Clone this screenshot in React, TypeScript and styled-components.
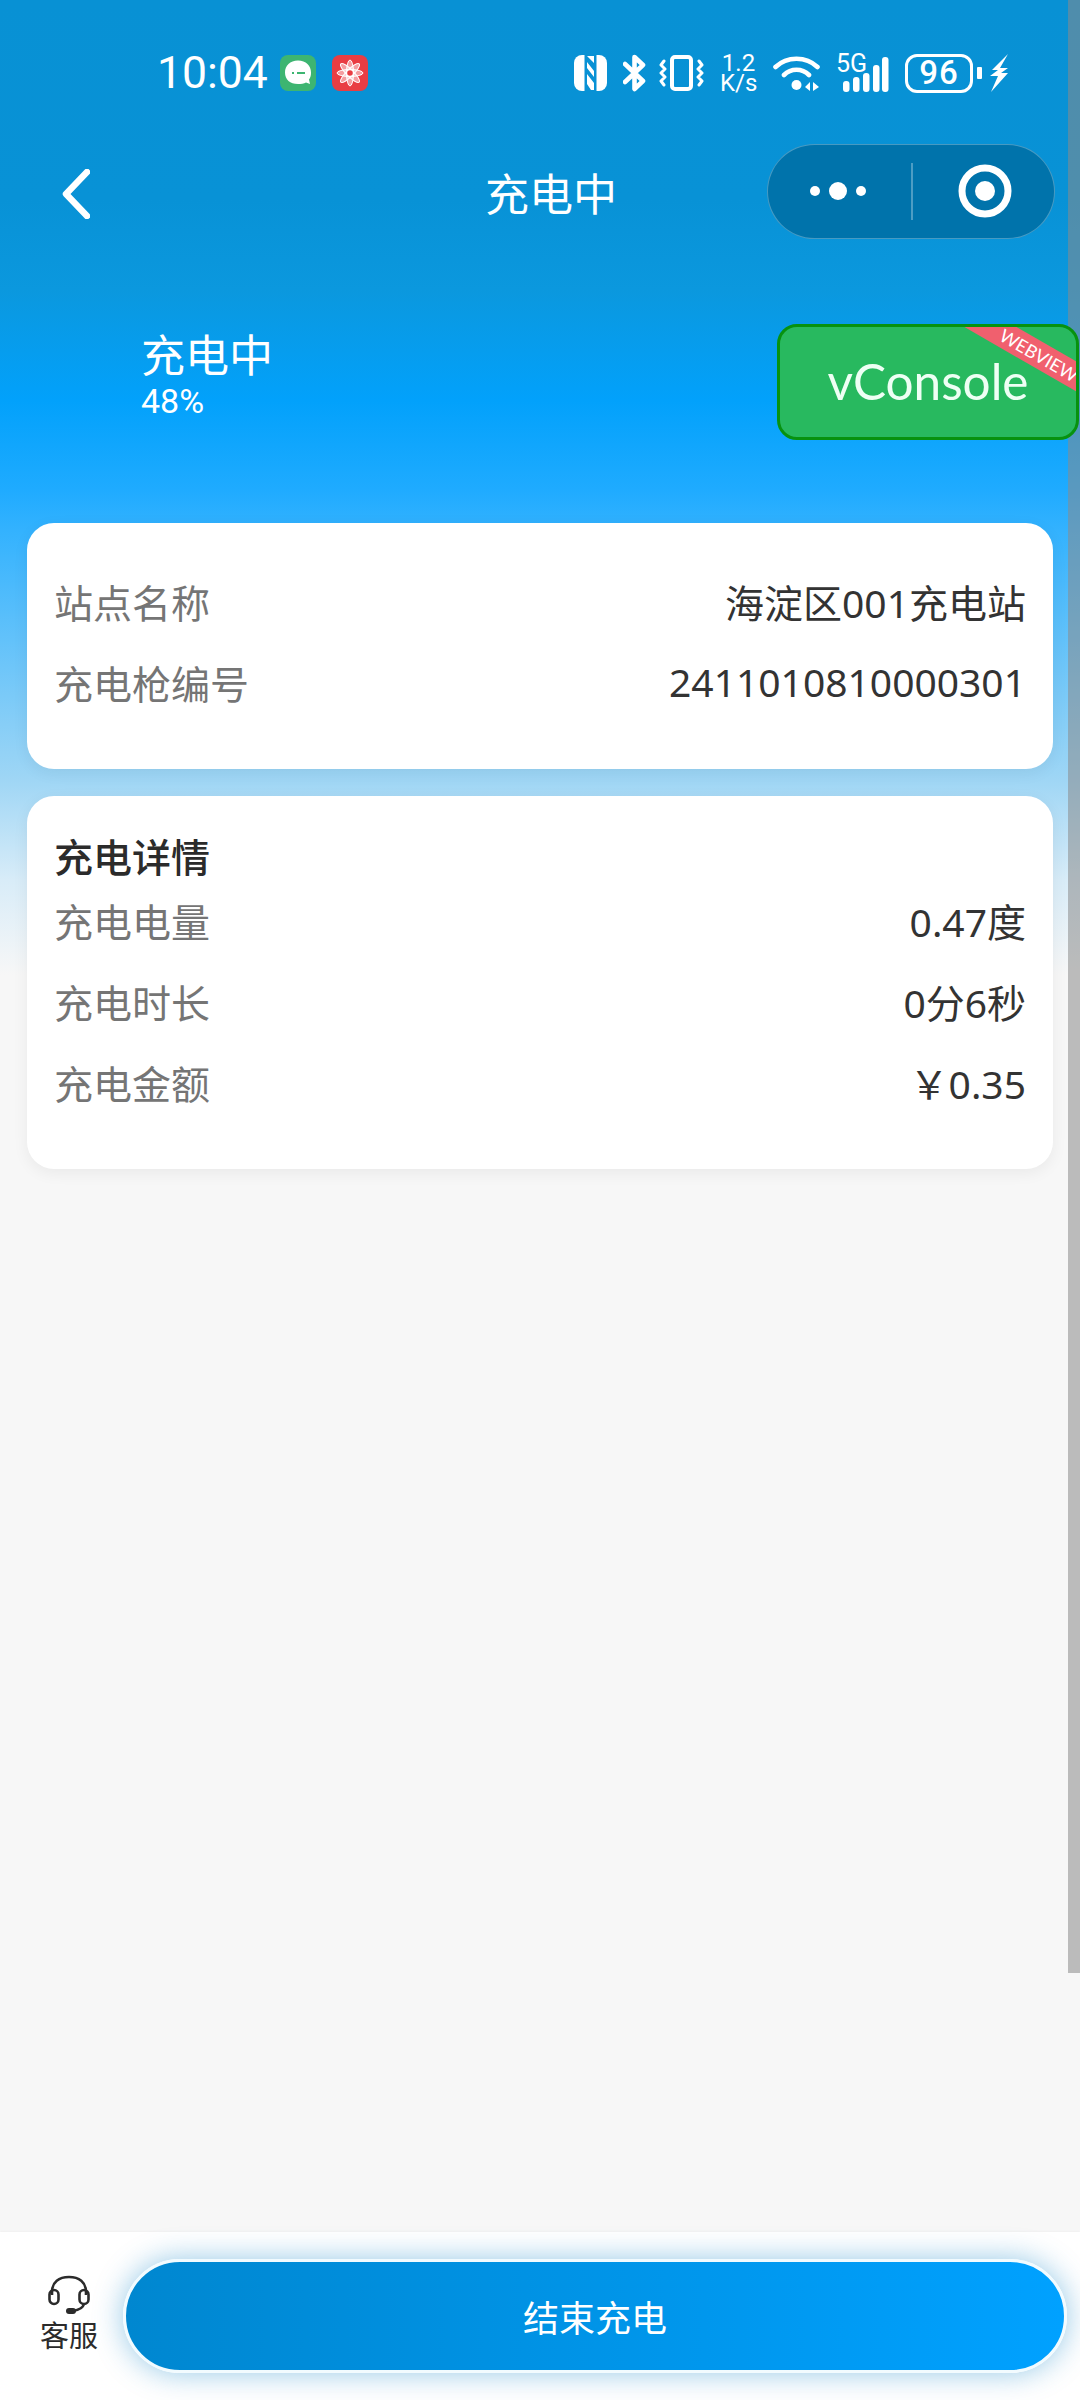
import styled, { createGlobalStyle } from 'styled-components'

const GlobalStyle = createGlobalStyle`
    html, body {
        margin: 0;
        padding: 0;
        background: #f7f7f7;
    }
    * {
        box-sizing: border-box;
    }
`

const Page = styled.div`
    position: relative;
    width: 1080px;
    height: 2400px;
    overflow: hidden;
    display: flex;
    flex-direction: column;
    font-family: "Noto Sans", "Noto Sans CJK SC", sans-serif;
    background: linear-gradient(
        #0891d4 0,
        #0892d6 200px,
        #0b98de 290px,
        #02a1fb 400px,
        #1fabff 490px,
        #33b2fe 530px,
        #9fd6f5 780px,
        #d8ecf8 880px,
        #f7f7f7 975px
    );
`

const StatusBar = styled.div`
    height: 143px;
    flex: none;
    padding: 53px 71px 0 157px;
    display: flex;
    align-items: flex-start;
    justify-content: space-between;
    color: #fff;
`

const StatusGroup = styled.div`
    height: 40px;
    display: flex;
    align-items: center;
    gap: ${props => props.$gap}px;
`

const IconPair = styled.div`
    display: flex;
    align-items: center;
    gap: 16px;
    margin-right: -3px;
`

const Clock = styled.span`
    font-family: Roboto, sans-serif;
    font-size: 44.5px;
    line-height: 40px;
    margin-right: -4px;
`

const Speed = styled.div`
    font-family: Roboto, sans-serif;
    font-size: 24px;
    line-height: 20px;
    text-align: center;
    width: 37px;
`

const Battery = styled.div`
    display: flex;
    align-items: center;
    gap: 4px;
`

const BatteryBody = styled.div`
    width: 68px;
    height: 39px;
    border: 3.5px solid #fff;
    border-radius: 12px;
    font-family: Roboto, sans-serif;
    font-weight: 500;
    font-size: 33px;
    line-height: 32px;
    letter-spacing: 1px;
    text-align: center;
`

const BatteryTip = styled.div`
    width: 5px;
    height: 12px;
    border-radius: 1px;
    background: #fff;
    margin-right: 3px;
`

const NavBar = styled.div`
    height: 96px;
    flex: none;
    padding: 0 25px 0 62px;
    display: flex;
    align-items: center;
    justify-content: space-between;
    position: relative;
`

const BackLink = styled.div`
    display: flex;
    margin-top: 6px;
`

const NavTitle = styled.div`
    position: absolute;
    left: 485px;
    top: 50%;
    margin-top: 3px;
    transform: translateY(-50%);
    color: #fff;
    font-size: 44px;
    line-height: 60px;
`

const Capsule = styled.div`
    width: 288px;
    height: 95px;
    border-radius: 48px;
    background: #0073ab;
    border: 1.5px solid rgba(255, 255, 255, .28);
    display: flex;
    align-items: center;
`

const MenuSide = styled.div`
    width: 143px;
    flex: none;
    padding-right: 4px;
    display: flex;
    justify-content: center;
`

const CloseSide = styled.div`
    flex: 1;
    padding-left: 4px;
    display: flex;
    justify-content: center;
`

const CapsuleLine = styled.div`
    width: 1.5px;
    height: 57px;
    background: rgba(255, 255, 255, .3);
`

const Hero = styled.div`
    height: 284px;
    flex: none;
    padding: 88px 0 0 141px;
    color: #fff;
`

const HeroTitle = styled.div`
    font-size: 44px;
    line-height: 56px;
`

const HeroPercent = styled.div`
    font-family: Roboto, sans-serif;
    font-size: 34px;
    line-height: 38px;
    margin-top: -1px;
`

const Card = styled.div`
    margin: 0 27px 27px;
    padding: ${props => props.$top}px 27px ${props => props.$bottom}px 27px;
    background: #fff;
    border-radius: 27px;
    box-shadow: 0 4px 16px rgba(0, 0, 0, .06);
`

const CardTitle = styled.div`
    font-size: 39px;
    line-height: 44px;
    font-weight: 500;
    color: #2b2b2b;
`

const Row = styled.div`
    height: 81px;
    display: flex;
    align-items: center;
    justify-content: space-between;
    font-size: 39px;
`

const Label = styled.span`
    color: #757575;
`

const Value = styled.span`
    color: #333;
`

const Footer = styled.div`
    margin-top: auto;
    height: 168px;
    flex: none;
    padding: 0 13px 0 40px;
    background: #fff;
    box-shadow: 0 -1px 2px rgba(0, 0, 0, .03);
    display: flex;
    align-items: center;
    gap: 25px;
`

const Service = styled.div`
    width: 58px;
    flex: none;
    display: flex;
    flex-direction: column;
    align-items: center;
    font-size: 29px;
    line-height: 42px;
    color: #2b2b2b;
    white-space: nowrap;
`

const EndButton = styled.button`
    flex: 1;
    height: 114px;
    border: 3px solid #f2fbff;
    border-radius: 57px;
    padding: 0;
    background: linear-gradient(90deg, #0087d0, #00a1ff);
    box-shadow: 0 0 30px rgba(0, 125, 195, .42);
    color: #fff;
    font-family: inherit;
    font-size: 36px;
`

const ScrollThumb = styled.div`
    position: absolute;
    top: 0;
    right: 0;
    width: 12px;
    height: 1973px;
    background: rgba(138, 138, 138, .55);
`

const VConsole = styled.div`
    position: absolute;
    left: 777px;
    top: 324px;
    width: 302px;
    height: 116px;
    overflow: hidden;
    border: 3px solid #07920f;
    border-radius: 20px;
    background: #28b95f;
    color: #eefff4;
    font-family: Lato, sans-serif;
    font-size: 49.5px;
    line-height: 108px;
    text-align: center;
`

const Ribbon = styled.div`
    position: absolute;
    left: 159px;
    top: 15px;
    width: 200px;
    height: 26px;
    transform: rotate(30deg);
    background: #f0606e;
    color: #fff;
    font-size: 18px;
    line-height: 26px;
    text-align: center;
`

const NfcIcon = () => (
    <svg width="33" height="36" viewBox="0 0 33 36">
        <path d="M8 0H10.500V36H8A8 8 0 0 1 0 28V8A8 8 0 0 1 8 0Z" fill="#fff" />
        <path d="M25 0H22.500V36H25A8 8 0 0 0 33 28V8A8 8 0 0 0 25 0Z" fill="#fff" />
        <path d="M13 1H20V8L13 1ZM13 7L20 16V22L13 13ZM13 19L20 28V35H17L13 29Z" fill="#fff" />
    </svg>
)

const BluetoothIcon = () => (
    <svg width="23" height="38" viewBox="0 0 23 38">
        <path d="M2 10L20 27L11.500 35V3L20 11L2 28" stroke="#fff" strokeWidth="4.600" strokeLinejoin="round" strokeLinecap="round" fill="none" />
    </svg>
)

const VibrateIcon = () => (
    <svg width="45" height="36" viewBox="0 0 45 36">
        <rect x="13" y="2" width="19" height="32" rx="3" stroke="#fff" strokeWidth="4" fill="none" />
        <path d="M5 6L2 10L6 14L2 18L6 22L2 26L5 30M40 6L43 10L39 14L43 18L39 22L43 26L40 30" stroke="#fff" strokeWidth="3" strokeLinejoin="round" strokeLinecap="round" fill="none" />
    </svg>
)

const WifiIcon = () => (
    <svg width="47" height="38" viewBox="0 0 47 38">
        <path d="M2.500 13C14 2 33 2 44.500 13M11 21C18 14 29 14 36 21" stroke="#fff" strokeWidth="4.600" strokeLinecap="round" fill="none" />
        <circle cx="23.500" cy="31" r="5" fill="#fff" />
        <path d="M37 28V37L32 33ZM40 28V37L46 33Z" fill="#fff" />
    </svg>
)

const SignalIcon = () => (
    <svg width="53" height="40" viewBox="0 0 53 40" overflow="visible">
        <text x="0" y="19" fontFamily="Roboto, sans-serif" fontSize="25" fill="#fff">5G</text>
        <rect x="7" y="28" width="6.500" height="11" rx="3" fill="#fff" />
        <rect x="17" y="24" width="6.500" height="15" rx="3" fill="#fff" />
        <rect x="27" y="20" width="6.500" height="19" rx="3" fill="#fff" />
        <rect x="37" y="12" width="6.500" height="27" rx="3" fill="#fff" />
        <rect x="46" y="4" width="6.500" height="35" rx="3" fill="#fff" />
    </svg>
)

const BoltIcon = () => (
    <svg width="20" height="40" viewBox="0 0 20 40">
        <path d="M19 1L3 17H9L1 23H9L2 39L19 20H12L19 15H11Z" fill="#fff" />
    </svg>
)

const MessageBadge = () => (
    <svg width="36" height="36" viewBox="0 0 36 36">
        <rect width="36" height="36" rx="8" fill="#3db571" />
        <path d="M18 5.500C10 5.500 5 10.500 5 17.500C5 24.500 10 29 18 29C21 29 24 28.400 26 27.400L30 29L29 24.600C30.600 22.600 31 20 31 17.500C31 10.500 26 5.500 18 5.500Z" fill="#fff" />
        <path d="M12 18H14M17 18H25" stroke="#3db571" strokeWidth="2" />
    </svg>
)

const FlowerBadge = () => (
    <svg width="36" height="36" viewBox="0 0 36 36">
        <rect width="36" height="36" rx="8" fill="#e93d43" />
        {[0, 45, 90, 135].map(angle => (
            <ellipse key={angle} cx="18" cy="18" rx="3.500" ry="13" fill="#fff" fillOpacity=".5" stroke="#fff" strokeWidth="1" transform={`rotate(${angle} 18 18)`} />
        ))}
        <circle cx="18" cy="18" r="3.500" fill="#e93d43" stroke="#fff" strokeWidth="1.400" />
    </svg>
)

const BackIcon = () => (
    <svg width="28" height="50" viewBox="0 0 28 50">
        <path d="M25 3L4 25L25 47" stroke="#fff" strokeWidth="6.500" strokeLinecap="round" strokeLinejoin="round" fill="none" />
    </svg>
)

const DotsIcon = () => (
    <svg width="58" height="20" viewBox="0 0 58 20">
        <circle cx="6" cy="10" r="5" fill="#fff" />
        <circle cx="29" cy="10" r="9" fill="#fff" />
        <circle cx="52" cy="10" r="5" fill="#fff" />
    </svg>
)

const TargetIcon = () => (
    <svg width="54" height="54" viewBox="0 0 54 54">
        <circle cx="27" cy="27" r="23" stroke="#fff" strokeWidth="7" fill="none" />
        <circle cx="27" cy="27" r="10" fill="#fff" />
    </svg>
)

const HeadsetIcon = () => (
    <svg width="42" height="40" viewBox="0 0 42 40">
        <path d="M4 20V17C4 7 11 2 21 2C31 2 38 7 38 17V20" stroke="#2b2b2b" strokeWidth="2.600" fill="none" />
        <rect x="1.500" y="15" width="9" height="14" rx="4.500" stroke="#2b2b2b" strokeWidth="2.600" fill="none" />
        <rect x="31.500" y="15" width="9" height="14" rx="4.500" stroke="#2b2b2b" strokeWidth="2.600" fill="none" />
        <path d="M36 29C35 33 31 35 25 36" stroke="#2b2b2b" strokeWidth="2.600" fill="none" />
        <rect x="18" y="33" width="10" height="6" rx="3" fill="#2b2b2b" />
    </svg>
)

const App = () => {
    return (
        <Page>
            <GlobalStyle />
            <StatusBar>
                <StatusGroup $gap={16}>
                    <Clock>10:04</Clock>
                    <MessageBadge />
                    <FlowerBadge />
                </StatusGroup>
                <StatusGroup $gap={16}>
                    <IconPair>
                        <NfcIcon />
                        <BluetoothIcon />
                    </IconPair>
                    <VibrateIcon />
                    <Speed>1.2<br />K/s</Speed>
                    <WifiIcon />
                    <SignalIcon />
                    <Battery>
                        <BatteryBody>96</BatteryBody>
                        <BatteryTip />
                        <BoltIcon />
                    </Battery>
                </StatusGroup>
            </StatusBar>
            <NavBar>
                <BackLink><BackIcon /></BackLink>
                <NavTitle>充电中</NavTitle>
                <Capsule>
                    <MenuSide><DotsIcon /></MenuSide>
                    <CapsuleLine />
                    <CloseSide><TargetIcon /></CloseSide>
                </Capsule>
            </NavBar>
            <Hero>
                <HeroTitle>充电中</HeroTitle>
                <HeroPercent>48%</HeroPercent>
            </Hero>
            <Card $top={37} $bottom={47}>
                <Row><Label>站点名称</Label><Value>海淀区001充电站</Value></Row>
                <Row><Label>充电枪编号</Label><Value>2411010810000301</Value></Row>
            </Card>
            <Card $top={39} $bottom={47}>
                <CardTitle>充电详情</CardTitle>
                <Row><Label>充电电量</Label><Value>0.47度</Value></Row>
                <Row><Label>充电时长</Label><Value>0分6秒</Value></Row>
                <Row><Label>充电金额</Label><Value>￥0.35</Value></Row>
            </Card>
            <Footer>
                <Service>
                    <HeadsetIcon />
                    客服
                </Service>
                <EndButton>结束充电</EndButton>
            </Footer>
            <ScrollThumb />
            <VConsole>
                vConsole
                <Ribbon>WEBVIEW</Ribbon>
            </VConsole>
        </Page>
    )
}

export default App
